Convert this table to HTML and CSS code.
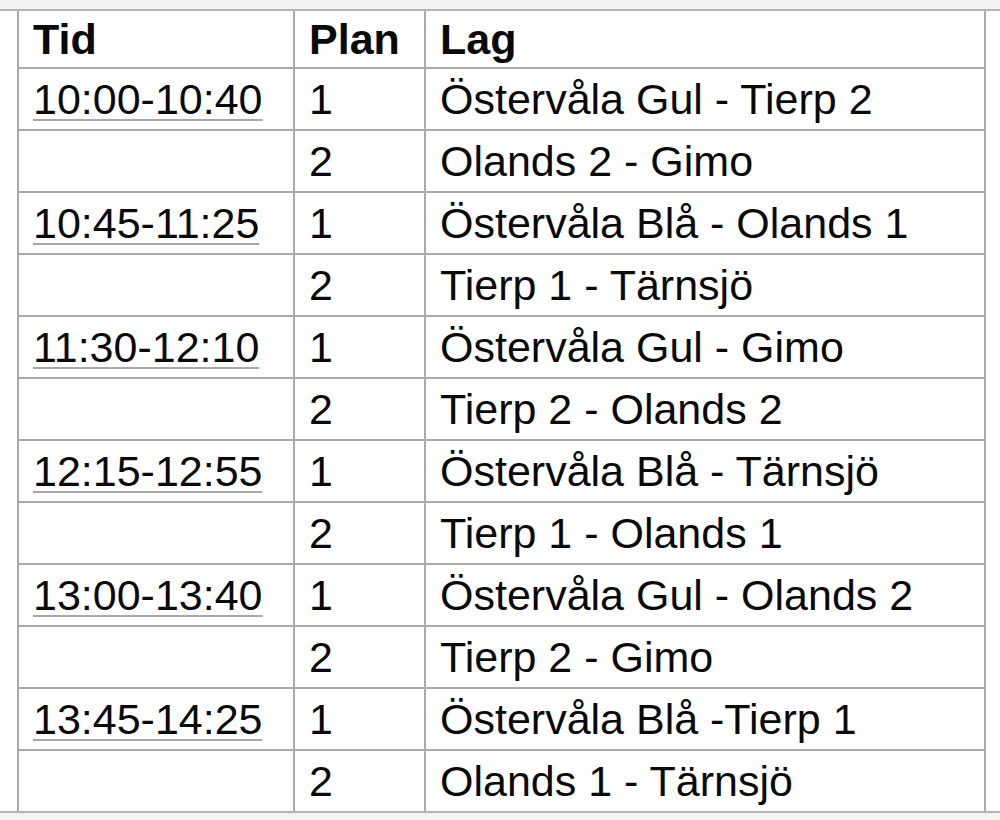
FILE: index.html
```html
<!DOCTYPE html>
<html lang="sv">
<head>
<meta charset="utf-8">
<title>Schema</title>
<link rel="stylesheet" href="styles.css">
</head>
<body>
<div class="topbar"></div>
<div class="sheet">
<table class="schedule">
<colgroup><col class="c-tid"><col class="c-plan"><col class="c-lag"></colgroup>
<thead>
<tr class="head"><th>Tid</th><th>Plan</th><th>Lag</th></tr>
</thead>
<tbody>
<tr><td><span class="time">10:00-10:40</span></td><td>1</td><td>Östervåla Gul - Tierp 2</td></tr>
<tr><td></td><td>2</td><td>Olands 2 - Gimo</td></tr>
<tr><td><span class="time">10:45-11:25</span></td><td>1</td><td>Östervåla Blå - Olands 1</td></tr>
<tr><td></td><td>2</td><td>Tierp 1 - Tärnsjö</td></tr>
<tr><td><span class="time">11:30-12:10</span></td><td>1</td><td>Östervåla Gul - Gimo</td></tr>
<tr><td></td><td>2</td><td>Tierp 2 - Olands 2</td></tr>
<tr><td><span class="time">12:15-12:55</span></td><td>1</td><td>Östervåla Blå - Tärnsjö</td></tr>
<tr><td></td><td>2</td><td>Tierp 1 - Olands 1</td></tr>
<tr><td><span class="time">13:00-13:40</span></td><td>1</td><td>Östervåla Gul - Olands 2</td></tr>
<tr><td></td><td>2</td><td>Tierp 2 - Gimo</td></tr>
<tr><td><span class="time">13:45-14:25</span></td><td>1</td><td>Östervåla Blå -Tierp 1</td></tr>
<tr><td></td><td>2</td><td>Olands 1 - Tärnsjö</td></tr>
</tbody>
</table>
</div>
</body>
</html>
```
FILE: styles.css
```css
html, body {
  margin: 0;
  padding: 0;
  background: #f3f3f3;
}
body {
  font-family: "Liberation Sans", Arial, sans-serif;
  color: #0a0a0a;
  width: 1000px;
  height: 820px;
  overflow: hidden;
}
.topbar {
  height: 9px;
  background: #f4f4f4;
}
.sheet {
  background: #fff;
  border-top: 2px solid #b4b4b4;
  border-bottom: 2px solid #b4b4b4;
  padding-left: 17px;
}
.schedule {
  border-collapse: collapse;
  table-layout: fixed;
  width: 967px;
  font-size: 43px;
}
.c-tid { width: 276px; }
.c-plan { width: 131px; }
.c-lag { width: 560px; }
.schedule th,
.schedule td {
  border: 2px solid #aaa;
  padding: 0 0 0 14px;
  text-align: left;
  vertical-align: middle;
  white-space: nowrap;
  height: 60px;
}
.schedule thead th {
  border-top: none;
  font-weight: bold;
  height: 56px;
}
.schedule tbody tr:last-child td {
  border-bottom: none;
}
.time {
  text-decoration: underline;
  text-decoration-color: #a8a8a8;
  text-decoration-thickness: 2px;
  text-underline-offset: 5px;
}
```
